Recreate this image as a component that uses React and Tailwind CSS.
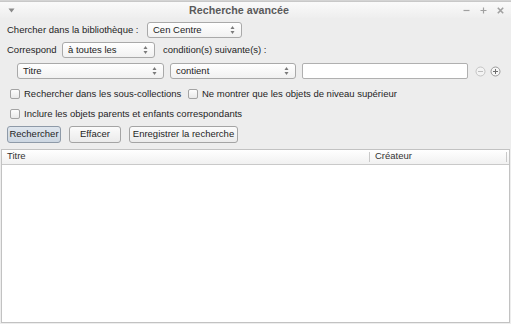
import React from "react";

function Arrows() {
  return (
    <svg width="5" height="10" viewBox="0 0 5 10">
      <path d="M2.5 1L4.5 4H0.5Z" fill="#7a7a7a" />
      <path d="M2.5 9L4.5 6H0.5Z" fill="#7a7a7a" />
    </svg>
  );
}

function Select({ label, className }) {
  return (
    <div
      className={
        "h-[16px] shrink-0 border border-[#a9a9a9] rounded-[3px] bg-linear-to-b from-white to-[#f1f1f1] flex items-center justify-between pl-[5px] pr-[6px] text-[#222] " +
        className
      }
    >
      <span>{label}</span>
      <Arrows />
    </div>
  );
}

function Check({ label }) {
  return (
    <div className="flex items-center gap-[4px]">
      <div className="w-[10px] h-[10px] rounded-[2px] border border-[#a3a3a3] bg-linear-to-b from-[#fdfdfd] to-[#e9e9e9]" />
      <span>{label}</span>
    </div>
  );
}

function Button({ label, pressed, className }) {
  return (
    <div
      className={
        "h-[17px] flex items-center justify-center rounded-[3px] border " +
        (pressed
          ? "border-[#8e9aa8] bg-linear-to-b from-[#dfe6ee] to-[#cdd7e2] "
          : "border-[#a4a4a4] bg-linear-to-b from-[#fbfbfb] to-[#ebebeb] ") +
        className
      }
    >
      {label}
    </div>
  );
}

export default function App() {
  return (
    <div className="w-[511px] h-[324px] bg-[#ededed] flex flex-col font-['Liberation_Sans',Arial,sans-serif] text-[9.5px] text-[#1e1e1e] overflow-hidden">
      {/* edge of window behind */}
      <div className="h-[2px] bg-[#d4d4d4] border-b border-[#c8c8c8]" />

      {/* Title bar */}
      <div className="h-[16px] flex items-center bg-linear-to-b from-[#fafafa] to-[#eeeeee]">
        <div className="w-[27px] pl-[8px] flex items-center">
          <svg width="7" height="5" viewBox="0 0 7 5">
            <path d="M0.5 0.5H6.5L3.5 4.5Z" fill="#8a8a8a" />
          </svg>
        </div>
        <div className="flex-1 text-center font-bold text-[10.7px] text-[#5a5a5a]">
          Recherche avancée
        </div>
        <div className="w-[60px] flex items-center gap-[10px] pl-[12px]">
          <svg width="7" height="7" viewBox="0 0 7 7">
            <path d="M0.5 3.5H6.5" stroke="#a0a0a0" strokeWidth="1.2" />
          </svg>
          <svg width="7" height="7" viewBox="0 0 7 7">
            <path d="M0.5 3.5H6.5M3.5 0.5V6.5" stroke="#a0a0a0" strokeWidth="1.2" />
          </svg>
          <svg width="7" height="7" viewBox="0 0 7 7">
            <path d="M0.8 0.8L6.2 6.2M6.2 0.8L0.8 6.2" stroke="#a0a0a0" strokeWidth="1.6" />
          </svg>
        </div>
      </div>

      {/* Search library row */}
      <div className="mt-[4px] px-[7px] flex items-center">
        <span className="w-[140px]">Chercher dans la bibliothèque :</span>
        <Select label="Cen Centre" className="w-[95px]" />
      </div>

      {/* Match row */}
      <div className="mt-[4px] px-[7px] flex items-center">
        <span className="w-[55px]">Correspond</span>
        <Select label="à toutes les" className="w-[93px]" />
        <span className="ml-[8px]">condition(s) suivante(s) :</span>
      </div>

      {/* Condition row */}
      <div className="mt-[5px] pl-[17px] flex items-center">
        <Select label="Titre" className="w-[147px]" />
        <Select label="contient" className="w-[126px] ml-[6px]" />
        <div className="ml-[6px] w-[166px] h-[16px] border border-[#b0b0b0] rounded-[2px] bg-white" />
        <div className="ml-[7px] flex items-center gap-[4px]">
          <svg width="11" height="11" viewBox="0 0 11 11">
            <circle cx="5.5" cy="5.5" r="4.5" fill="#f3f3f3" stroke="#c4c4c4" />
            <path d="M3 5.5H8" stroke="#bdbdbd" strokeWidth="1" />
          </svg>
          <svg width="11" height="11" viewBox="0 0 11 11">
            <circle cx="5.5" cy="5.5" r="4.5" fill="#f6f6f6" stroke="#9a9a9a" />
            <path d="M3 5.5H8M5.5 3V8" stroke="#6e6e6e" strokeWidth="1" />
          </svg>
        </div>
      </div>

      {/* Options */}
      <div className="mt-[8px] pl-[10px] flex items-center">
        <div className="w-[178px]">
          <Check label="Rechercher dans les sous-collections" />
        </div>
        <Check label="Ne montrer que les objets de niveau supérieur" />
      </div>
      <div className="mt-[6px] pl-[10px] flex items-center">
        <Check label="Inclure les objets parents et enfants correspondants" />
      </div>

      {/* Buttons */}
      <div className="mt-[4px] pl-[7px] flex items-center gap-[8px]">
        <Button label="Rechercher" pressed className="w-[54px]" />
        <Button label="Effacer" className="w-[52px]" />
        <Button label="Enregistrer la recherche" className="w-[109px]" />
      </div>

      {/* Results tree */}
      <div className="mt-[6px] mx-[1px] mb-[1px] flex-1 border border-[#c2c2c2] bg-white flex flex-col">
        <div className="h-[15px] flex items-center border-b border-[#c9c9c9] bg-linear-to-b from-white to-[#f1f1f1] text-[#333]">
          <div className="w-[368px] pl-[5px] border-r border-[#c9c9c9] h-[10px] flex items-center">Titre</div>
          <div className="flex-1 pl-[5px] border-r border-[#c9c9c9] h-[10px] flex items-center">Créateur</div>
          <div className="w-[2px]" />
        </div>
        <div className="flex-1" />
      </div>
    </div>
  );
}
